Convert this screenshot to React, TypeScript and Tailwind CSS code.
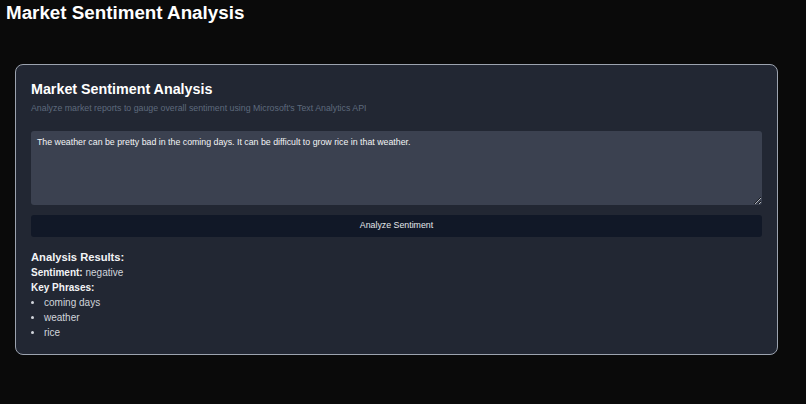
import React from "react";

export default function App() {
  const phrases = ["coming days", "weather", "rice"];
  return (
    <div className="min-h-[404px] w-full bg-[#0a0a0a] text-[#e5e7eb] font-['Liberation_Sans',Arial,sans-serif]">
      <h1 className="px-[6px] text-[18.8px] leading-[26px] font-bold text-white">Market Sentiment Analysis</h1>
      <div className="mt-[38px] ml-[15px] w-[763px] rounded-[8px] border border-[#9ca3af] bg-[#222733] px-[15px] pt-[14px] pb-[14px]">
        <h2 className="text-[14.3px] leading-[20px] font-bold text-white">Market Sentiment Analysis</h2>
        <p className="mt-[3px] text-[8.8px] leading-[12px] text-[#5e6a7d]">
          Analyze market reports to gauge overall sentiment using Microsoft's Text Analytics API
        </p>
        <textarea
          className="mt-[17px] block h-[74px] w-full rounded-[3px] bg-[#3b4150] px-[6px] py-[5px] text-[8.8px] leading-[12px] text-[#f3f4f6] outline-none"
          defaultValue="The weather can be pretty bad in the coming days. It can be difficult to grow rice in that weather."
        />
        <button className="mt-[10px] flex h-[22px] w-full items-center justify-center rounded-[3px] bg-[#111827] text-[8.8px] text-[#e5e7eb]">
          Analyze Sentiment
        </button>
        <h3 className="mt-[12px] text-[11.2px] leading-[16px] font-bold text-[#f3f4f6]">Analysis Results:</h3>
        <p className="text-[10px] leading-[15px] text-[#d1d5db]">
          <span className="font-bold text-[#f3f4f6]">Sentiment:</span> negative
        </p>
        <p className="text-[10px] leading-[15px] font-bold text-[#f3f4f6]">Key Phrases:</p>
        <ul className="list-disc pl-[13px] text-[10px] leading-[15px] text-[#d1d5db]">
          {phrases.map((p) => (
            <li key={p}>{p}</li>
          ))}
        </ul>
      </div>
    </div>
  );
}
